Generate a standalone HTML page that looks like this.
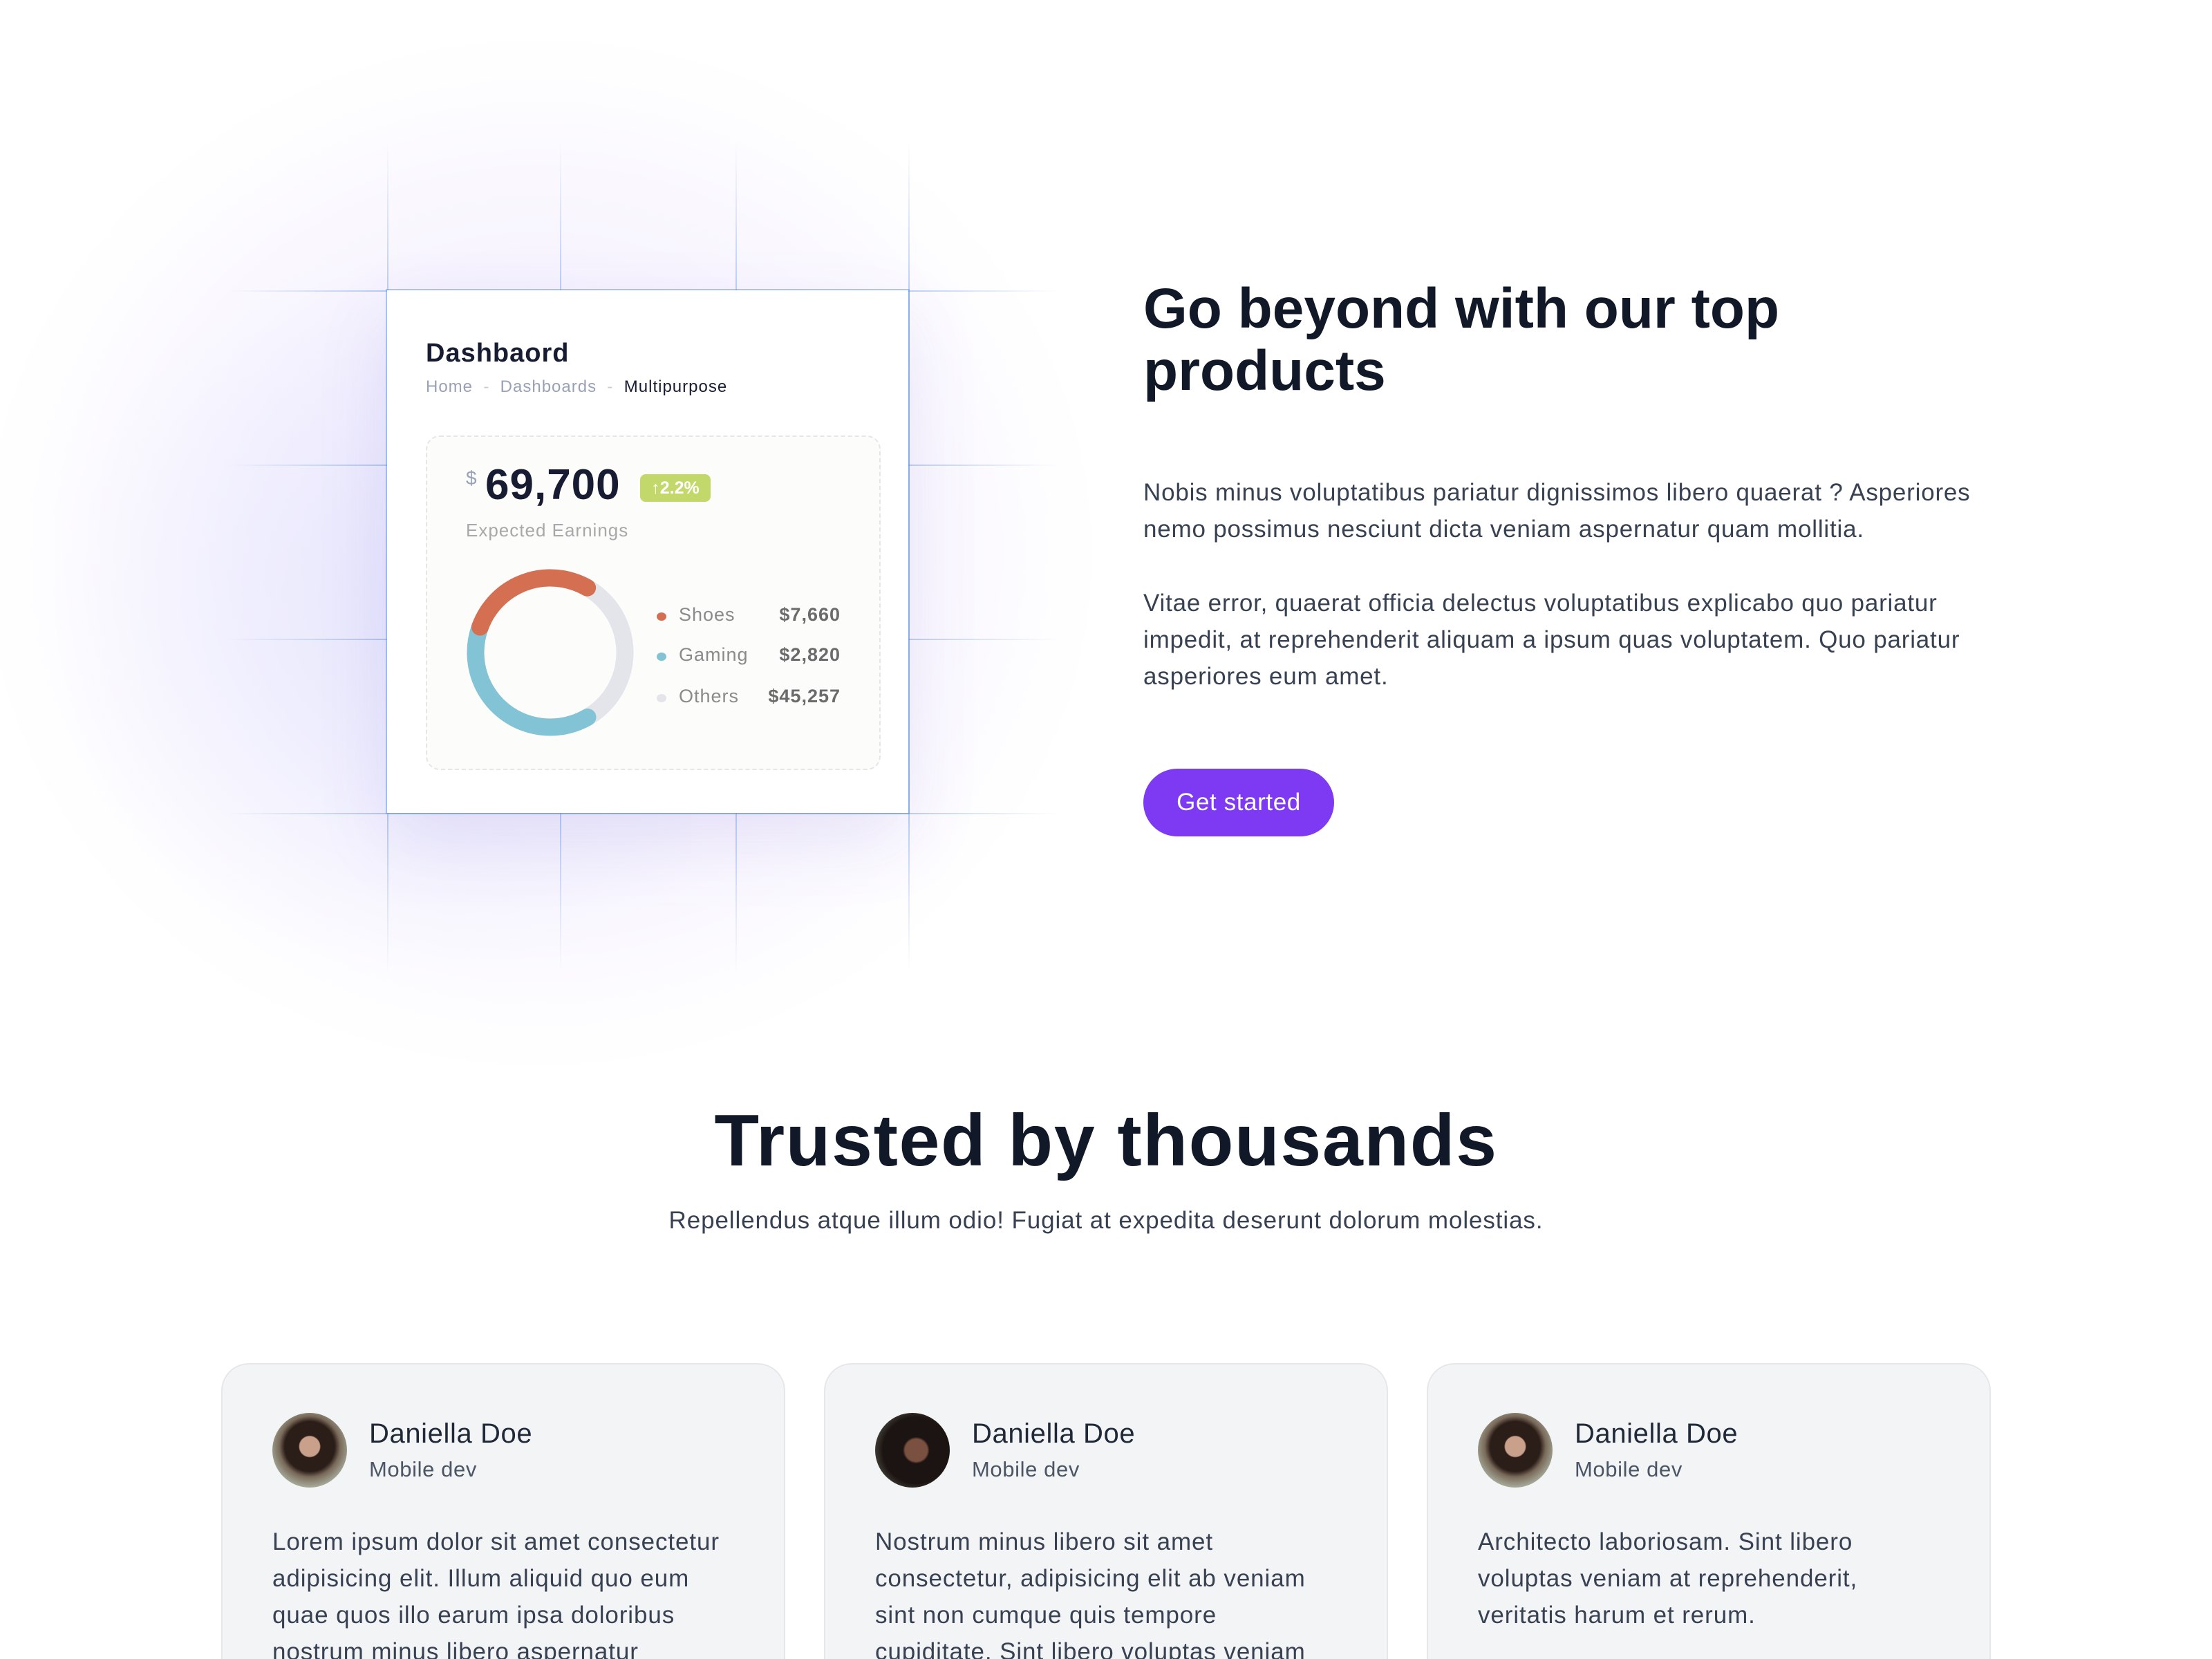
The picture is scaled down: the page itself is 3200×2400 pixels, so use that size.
<!DOCTYPE html>
<html><head><meta charset="utf-8">
<style>
html,body{margin:0;padding:0;background:#fff;}
body{width:3200px;height:2400px;overflow:hidden;}
#r{zoom:2;width:1600px;height:1200px;position:relative;overflow:hidden;font-family:"Liberation Sans",sans-serif;}
.abs{position:absolute;}
.glow1{left:-20px;top:20px;width:820px;height:760px;background:radial-gradient(ellipse at 50% 50%,rgba(139,92,246,0.13) 0%,rgba(139,92,246,0.07) 38%,rgba(139,92,246,0) 70%);}
.glow2{left:40px;top:180px;width:460px;height:520px;background:radial-gradient(ellipse at 60% 50%,rgba(110,150,240,0.10) 0%,rgba(110,150,240,0.04) 45%,rgba(110,150,240,0) 72%);}
.vl{width:1px;top:102px;height:602px;background:linear-gradient(to bottom,rgba(96,150,230,0),rgba(96,150,230,0.45) 20%,rgba(96,150,230,0.45) 80%,rgba(96,150,230,0));}
.hl{height:1px;left:163px;width:602px;background:linear-gradient(to right,rgba(96,150,230,0),rgba(96,150,230,0.45) 20%,rgba(96,150,230,0.45) 80%,rgba(96,150,230,0));}
.card{left:280px;top:210px;width:377px;height:378px;background:#fff;box-shadow:0 0 0 1px rgba(96,150,230,0.5),0 20px 50px rgba(100,80,200,0.12);}
h1{margin:0;position:absolute;left:827px;top:201px;font-size:41px;line-height:45px;font-weight:bold;color:#111827;letter-spacing:0px;}
.p{left:827px;width:615px;font-size:17.5px;line-height:26.5px;color:#374151;letter-spacing:0.4px;}
.btn{left:827px;top:556px;width:138px;height:49px;border-radius:25px;background:#7e3af2;color:#fff;font-size:17.5px;line-height:49px;text-align:center;letter-spacing:0.3px;}
h2{margin:0;position:absolute;left:0;width:1600px;text-align:center;top:794px;font-size:53px;line-height:62px;font-weight:bold;color:#111827;letter-spacing:0.8px;}
.sub{left:0;width:1600px;text-align:center;top:873px;font-size:17.5px;color:#374151;letter-spacing:0.45px;}
.tc{top:986px;width:406px;height:260px;background:#f3f4f6;border:1px solid #e5e7eb;border-radius:20px;}
.av{left:36px;top:35px;width:54px;height:54px;border-radius:50%;background:radial-gradient(circle at 50% 45%,#c9a08a 0 18%,#2b1d18 20% 45%,#7a6a5a 55%,#a9b0a0 75%);}
.nm{left:106px;top:39px;font-size:20px;color:#1f2937;letter-spacing:0.3px;}
.rl{left:106px;top:67px;font-size:15.5px;color:#4b5563;letter-spacing:0.3px;}
.tx{left:36px;top:115px;width:332px;font-size:17.5px;line-height:26.5px;color:#374151;letter-spacing:0.45px;}
.d{letter-spacing:0.5px;}
</style></head><body><div id="r">
<div class="abs glow1"></div><div class="abs glow2"></div>
<div class="abs vl" style="left:280px"></div><div class="abs vl" style="left:405px"></div><div class="abs vl" style="left:532px"></div><div class="abs vl" style="left:657px"></div>
<div class="abs hl" style="top:210px"></div><div class="abs hl" style="top:336px"></div><div class="abs hl" style="top:462px"></div><div class="abs hl" style="top:588px"></div>
<div class="abs card">
 <div class="abs d" style="left:28px;top:35px;font-size:19px;font-weight:bold;color:#181c32">Dashbaord</div>
 <div class="abs d" style="left:28px;top:63px;font-size:12px;color:#99a1b7;white-space:nowrap">Home <span style="color:#ccc">&nbsp;-&nbsp;</span> Dashboards <span style="color:#ccc">&nbsp;-&nbsp;</span> <span style="color:#181c32">Multipurpose</span></div>
 <div class="abs" style="left:28px;top:105px;width:327px;height:240px;border:1px dashed #e6e6e6;border-radius:10px;background:#fcfcfb;">
  <div class="abs" style="left:28px;top:22px;font-size:14px;color:#99a1b7">$</div>
  <div class="abs" style="left:42px;top:17px;font-size:31px;font-weight:bold;color:#181c32;letter-spacing:0.5px">69,700</div>
  <div class="abs" style="left:154px;top:27px;width:51px;height:20px;border-radius:4px;background:#c2d86a;color:#fff;font-size:12.5px;line-height:20px;text-align:center;font-weight:bold">↑2.2%</div>
  <div class="abs d" style="left:28px;top:60px;font-size:13px;color:#a8a8a8">Expected Earnings</div>
  <svg class="abs" style="left:27px;top:94px" width="124" height="124" viewBox="0 0 124 124">
   <circle cx="62" cy="62" r="54" fill="none" stroke="#e4e5ea" stroke-width="12.5"/>
   <circle cx="62" cy="62" r="54" fill="none" stroke="#82c4d5" stroke-width="12.5" stroke-linecap="round" stroke-dasharray="132 400" transform="rotate(60 62 62)"/>
   <circle cx="62" cy="62" r="54" fill="none" stroke="#d56f52" stroke-width="12.5" stroke-linecap="round" stroke-dasharray="94 400" transform="rotate(200 62 62)"/>
  </svg>
  <div class="abs" style="left:166px;top:127px;width:7px;height:6px;border-radius:50%;background:#d56f52"></div>
  <div class="abs" style="left:166px;top:156px;width:7px;height:6px;border-radius:50%;background:#82c4d5"></div>
  <div class="abs" style="left:166px;top:186px;width:7px;height:6px;border-radius:50%;background:#e4e5ea"></div>
  <div class="abs d" style="left:182px;top:121px;font-size:13.5px;color:#8a8a8a">Shoes</div>
  <div class="abs d" style="left:182px;top:150px;font-size:13.5px;color:#8a8a8a">Gaming</div>
  <div class="abs d" style="left:182px;top:180px;font-size:13.5px;color:#8a8a8a">Others</div>
  <div class="abs d" style="right:28px;top:121px;font-size:13.5px;font-weight:bold;color:#6b6b6b">$7,660</div>
  <div class="abs d" style="right:28px;top:150px;font-size:13.5px;font-weight:bold;color:#6b6b6b">$2,820</div>
  <div class="abs d" style="right:28px;top:180px;font-size:13.5px;font-weight:bold;color:#6b6b6b">$45,257</div>
 </div>
</div>
<h1>Go beyond with our top<br>products</h1>
<div class="abs p" style="top:343px">Nobis minus voluptatibus pariatur dignissimos libero quaerat ? Asperiores nemo possimus nesciunt dicta veniam aspernatur quam mollitia.</div>
<div class="abs p" style="top:423px">Vitae error, quaerat officia delectus voluptatibus explicabo quo pariatur impedit, at reprehenderit aliquam a ipsum quas voluptatem. Quo pariatur asperiores eum amet.</div>
<div class="abs btn">Get started</div>
<h2>Trusted by thousands</h2>
<div class="abs sub">Repellendus atque illum odio! Fugiat at expedita deserunt dolorum molestias.</div>
<div class="abs tc" style="left:160px"><div class="abs av"></div><div class="abs nm">Daniella Doe</div><div class="abs rl">Mobile dev</div><div class="abs tx">Lorem ipsum dolor sit amet consectetur adipisicing elit. Illum aliquid quo eum quae quos illo earum ipsa doloribus nostrum minus libero aspernatur</div></div>
<div class="abs tc" style="left:596px"><div class="abs av" style="background:radial-gradient(circle at 55% 50%,#7a5040 0 20%,#1c1412 24% 60%,#4a4a40 80%)"></div><div class="abs nm">Daniella Doe</div><div class="abs rl">Mobile dev</div><div class="abs tx">Nostrum minus libero sit amet consectetur, adipisicing elit ab veniam sint non cumque quis tempore cupiditate. Sint libero voluptas veniam at</div></div>
<div class="abs tc" style="left:1032px"><div class="abs av"></div><div class="abs nm">Daniella Doe</div><div class="abs rl">Mobile dev</div><div class="abs tx">Architecto laboriosam. Sint libero voluptas veniam at reprehenderit, veritatis harum et rerum.</div></div>
</div></body></html>
